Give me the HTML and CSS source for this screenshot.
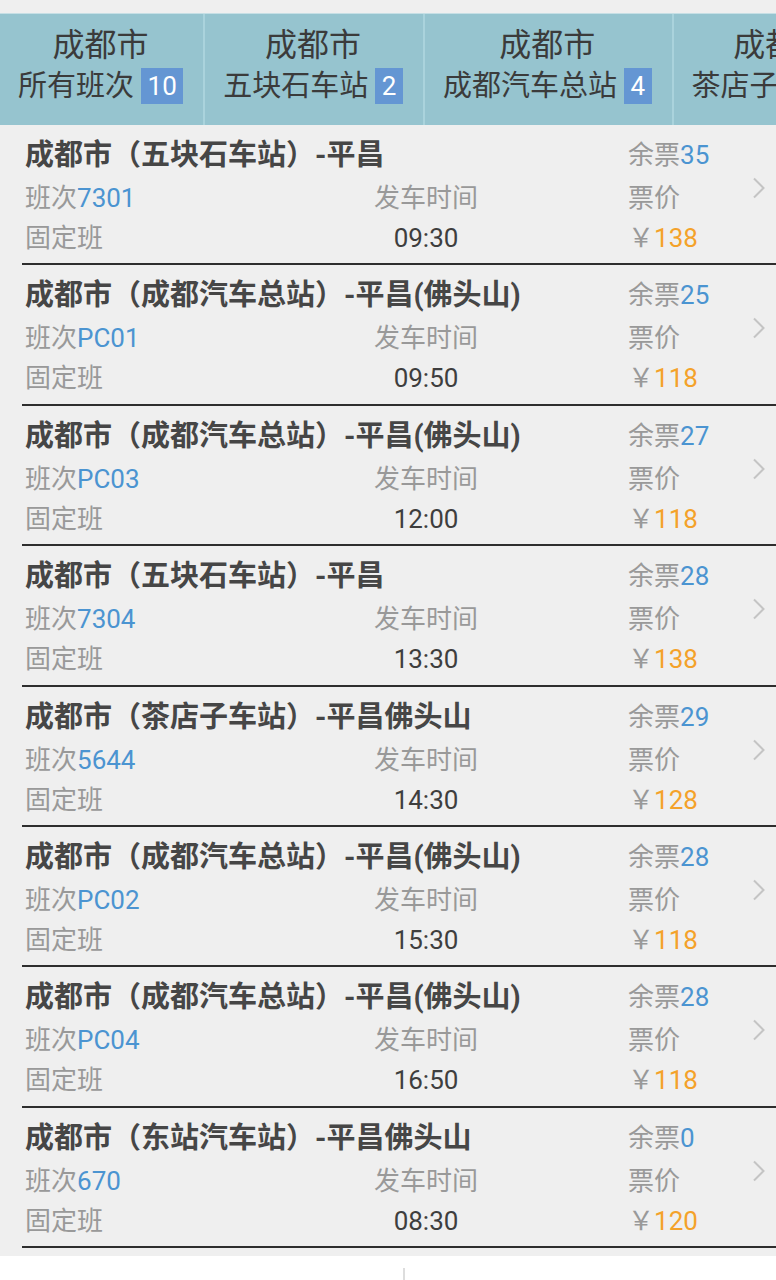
FILE: index.html
```html
<!DOCTYPE html>
<html lang="zh-CN">
  <head>
    <meta charset="UTF-8" />
    <meta name="viewport" content="width=device-width, initial-scale=1.0" />
    <title>成都市 - 平昌 班次</title>
    <link rel="stylesheet" href="styles.css">
  </head>
  <body>
    <div class="tabs">
      <div class="tab">
        <div class="tab-city">成都市</div>
        <div class="tab-station">所有班次<span class="badge">10</span></div>
      </div>
      <div class="tab">
        <div class="tab-city">成都市</div>
        <div class="tab-station">五块石车站<span class="badge">2</span></div>
      </div>
      <div class="tab">
        <div class="tab-city">成都市</div>
        <div class="tab-station">成都汽车总站<span class="badge">4</span></div>
      </div>
      <div class="tab">
        <div class="tab-city">成都市</div>
        <div class="tab-station">茶店子车站<span class="badge">1</span></div>
      </div>
      <div class="tab">
        <div class="tab-city">成都市</div>
        <div class="tab-station">东站汽车站<span class="badge">1</span></div>
      </div>
    </div>

    <div class="list">
      <div class="trip">
        <div class="route">成都市（五块石车站）-平昌</div>
        <div class="left-col">余票<span class="blue">35</span></div>
        <div>班次<span class="blue">7301</span></div>
        <div class="mid"><span class="mid-box">发车时间</span></div>
        <div>票价</div>
        <div class="arrow"><svg width="14" height="22" viewBox="0 0 14 22"><path d="M2 1.5 L11.5 11 L2 20.5" fill="none" stroke="#c4c4c4" stroke-width="2"/></svg></div>
        <div>固定班</div>
        <div class="mid"><span class="mid-box time">09:30</span></div>
        <div class="price">￥<span class="orange">138</span></div>
      </div>

      <div class="trip">
        <div class="route">成都市（成都汽车总站）-平昌(佛头山)</div>
        <div class="left-col">余票<span class="blue">25</span></div>
        <div>班次<span class="blue">PC01</span></div>
        <div class="mid"><span class="mid-box">发车时间</span></div>
        <div>票价</div>
        <div class="arrow"><svg width="14" height="22" viewBox="0 0 14 22"><path d="M2 1.5 L11.5 11 L2 20.5" fill="none" stroke="#c4c4c4" stroke-width="2"/></svg></div>
        <div>固定班</div>
        <div class="mid"><span class="mid-box time">09:50</span></div>
        <div class="price">￥<span class="orange">118</span></div>
      </div>

      <div class="trip">
        <div class="route">成都市（成都汽车总站）-平昌(佛头山)</div>
        <div class="left-col">余票<span class="blue">27</span></div>
        <div>班次<span class="blue">PC03</span></div>
        <div class="mid"><span class="mid-box">发车时间</span></div>
        <div>票价</div>
        <div class="arrow"><svg width="14" height="22" viewBox="0 0 14 22"><path d="M2 1.5 L11.5 11 L2 20.5" fill="none" stroke="#c4c4c4" stroke-width="2"/></svg></div>
        <div>固定班</div>
        <div class="mid"><span class="mid-box time">12:00</span></div>
        <div class="price">￥<span class="orange">118</span></div>
      </div>

      <div class="trip">
        <div class="route">成都市（五块石车站）-平昌</div>
        <div class="left-col">余票<span class="blue">28</span></div>
        <div>班次<span class="blue">7304</span></div>
        <div class="mid"><span class="mid-box">发车时间</span></div>
        <div>票价</div>
        <div class="arrow"><svg width="14" height="22" viewBox="0 0 14 22"><path d="M2 1.5 L11.5 11 L2 20.5" fill="none" stroke="#c4c4c4" stroke-width="2"/></svg></div>
        <div>固定班</div>
        <div class="mid"><span class="mid-box time">13:30</span></div>
        <div class="price">￥<span class="orange">138</span></div>
      </div>

      <div class="trip">
        <div class="route">成都市（茶店子车站）-平昌佛头山</div>
        <div class="left-col">余票<span class="blue">29</span></div>
        <div>班次<span class="blue">5644</span></div>
        <div class="mid"><span class="mid-box">发车时间</span></div>
        <div>票价</div>
        <div class="arrow"><svg width="14" height="22" viewBox="0 0 14 22"><path d="M2 1.5 L11.5 11 L2 20.5" fill="none" stroke="#c4c4c4" stroke-width="2"/></svg></div>
        <div>固定班</div>
        <div class="mid"><span class="mid-box time">14:30</span></div>
        <div class="price">￥<span class="orange">128</span></div>
      </div>

      <div class="trip">
        <div class="route">成都市（成都汽车总站）-平昌(佛头山)</div>
        <div class="left-col">余票<span class="blue">28</span></div>
        <div>班次<span class="blue">PC02</span></div>
        <div class="mid"><span class="mid-box">发车时间</span></div>
        <div>票价</div>
        <div class="arrow"><svg width="14" height="22" viewBox="0 0 14 22"><path d="M2 1.5 L11.5 11 L2 20.5" fill="none" stroke="#c4c4c4" stroke-width="2"/></svg></div>
        <div>固定班</div>
        <div class="mid"><span class="mid-box time">15:30</span></div>
        <div class="price">￥<span class="orange">118</span></div>
      </div>

      <div class="trip">
        <div class="route">成都市（成都汽车总站）-平昌(佛头山)</div>
        <div class="left-col">余票<span class="blue">28</span></div>
        <div>班次<span class="blue">PC04</span></div>
        <div class="mid"><span class="mid-box">发车时间</span></div>
        <div>票价</div>
        <div class="arrow"><svg width="14" height="22" viewBox="0 0 14 22"><path d="M2 1.5 L11.5 11 L2 20.5" fill="none" stroke="#c4c4c4" stroke-width="2"/></svg></div>
        <div>固定班</div>
        <div class="mid"><span class="mid-box time">16:50</span></div>
        <div class="price">￥<span class="orange">118</span></div>
      </div>

      <div class="trip">
        <div class="route">成都市（东站汽车站）-平昌佛头山</div>
        <div class="left-col">余票<span class="blue">0</span></div>
        <div>班次<span class="blue">670</span></div>
        <div class="mid"><span class="mid-box">发车时间</span></div>
        <div>票价</div>
        <div class="arrow"><svg width="14" height="22" viewBox="0 0 14 22"><path d="M2 1.5 L11.5 11 L2 20.5" fill="none" stroke="#c4c4c4" stroke-width="2"/></svg></div>
        <div>固定班</div>
        <div class="mid"><span class="mid-box time">08:30</span></div>
        <div class="price">￥<span class="orange">120</span></div>
      </div>
    </div>

    <div class="footer">
      <div class="footer-btn"></div>
      <div class="footer-btn"></div>
    </div>
  </body>
</html>
```

FILE: styles.css
```css
body {
  margin: 0;
  background-color: #efefef;
  font-family: Roboto, "Noto Sans CJK SC", sans-serif;
  color: #999;
  overflow: hidden;
}
.tabs {
  display: flex;
  margin-top: 13px;
  height: 112px;
  background-color: #96c4cf;
  border-top: 1px solid #c6dfe5;
  box-sizing: border-box;
  overflow: hidden;
  white-space: nowrap;
}
.tab {
  flex: none;
  padding: 11px 20px 0 18px;
  border-right: 2px solid #aad3dc;
  color: #3b3b3b;
  text-align: center;
}
.tab-city {
  font-size: 32px;
  line-height: 40px;
}
.tab-station {
  margin-top: 3px;
  font-size: 29px;
  line-height: 36px;
  display: flex;
  align-items: center;
}
.badge {
  margin-left: 7px;
  padding: 0 6.5px;
  height: 36px;
  line-height: 36px;
  font-size: 26px;
  color: #fff;
  background-color: #6496d3;
}
.list {
  padding-bottom: 8px;
}
.trip {
  margin-left: 22px;
  padding: 10px 0 5.4px 3px;
  border-bottom: 2px solid #2e2e2e;
  display: grid;
  grid-template-columns: 349px 254px 124px 1fr;
  grid-template-rows: 43px 40px 40px;
  font-size: 26px;
  line-height: 40px;
  white-space: nowrap;
}
.route {
  grid-column: 1 / 3;
  align-self: start;
  font-size: 29px;
  font-weight: bold;
  color: #464646;
}
.left-col {
  align-self: start;
}
.mid-box {
  display: inline-block;
  width: 104px;
  text-align: center;
}
.time {
  color: #3e3e3e;
}
.blue {
  color: #4b94d1;
}
.orange {
  color: #f4a22a;
}
.arrow {
  grid-row: 1 / 3;
  grid-column: 4;
  align-self: end;
  padding-bottom: 19px;
  line-height: 0;
}
.footer {
  display: flex;
  background-color: #fff;
  height: 60px;
}
.footer-btn {
  flex: 1;
  margin-top: 12px;
}
.footer-btn:first-child {
  flex: 0 0 403px;
}
.footer-btn + .footer-btn {
  border-left: 2px solid #ddd;
}
```
